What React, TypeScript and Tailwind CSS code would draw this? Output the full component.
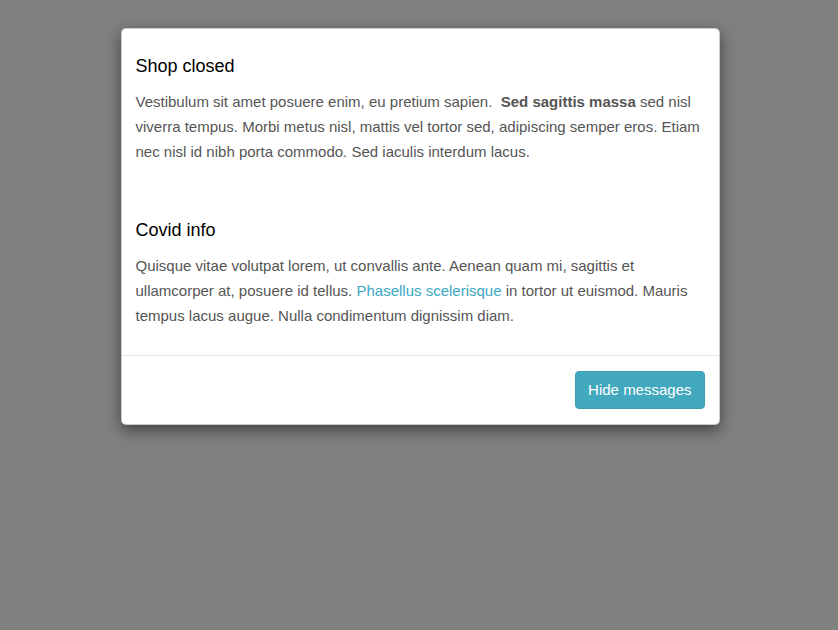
const App = () => {
  return (
    <div className="min-h-[630px] w-full bg-[#808080] pt-[28px] font-['Liberation_Sans',Arial,sans-serif]">
      <div className="mx-auto w-[599px] translate-x-[1px] rounded-[5px] border border-black/20 bg-white shadow-[0_5px_15px_rgba(0,0,0,0.5)]">
        <div className="px-[14px] pt-[27px] pb-[27px]">
          <h3 className="text-[18px] leading-[20px] text-black">Shop closed</h3>
          <p className="mt-[13px] text-[15px] leading-[25px] text-[#555]">
            Vestibulum sit amet posuere enim, eu pretium sapien.&nbsp;{' '}
            <b className="font-bold">Sed sagittis massa</b> sed nisl viverra tempus. Morbi metus nisl,
            mattis vel tortor sed, adipiscing semper eros. Etiam nec nisl id nibh porta commodo. Sed
            iaculis interdum lacus.
          </p>

          <h3 className="mt-[56px] text-[18px] leading-[20px] text-black">Covid info</h3>
          <p className="mt-[13px] text-[15px] leading-[25px] text-[#555]">
            Quisque vitae volutpat lorem, ut convallis ante. Aenean quam mi, sagittis et ullamcorper at,
            posuere id tellus. <a className="text-[#3aa8c1]">Phasellus scelerisque</a> in tortor ut
            euismod. Mauris tempus lacus augue. Nulla condimentum dignissim diam.
          </p>
        </div>
        <div className="flex justify-end border-t border-[#e5e5e5] px-[14px] pt-[15px] pb-[15px]">
          <button className="h-[38px] rounded-[4px] border border-[#3a9db2] bg-[#42a8be] px-[12px] text-[15px] text-white">
            Hide messages
          </button>
        </div>
      </div>
    </div>
  )
}

export default App
